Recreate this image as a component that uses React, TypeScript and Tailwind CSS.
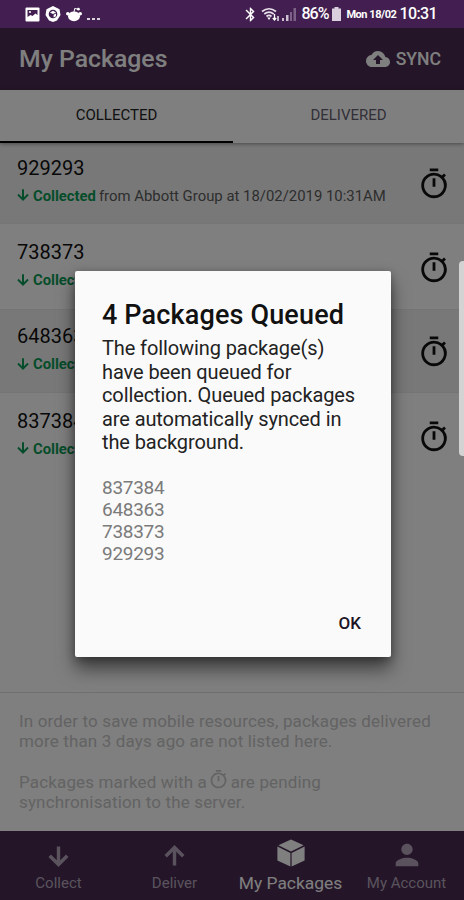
import type { ReactNode } from "react";
import { MdBluetooth, MdCloudUpload, MdOutlineTimer, MdPerson } from "react-icons/md";

const packages = [
  { id: "929293", details: "from Abbott Group at 18/02/2019 10:31AM" },
  { id: "738373", details: "" },
  { id: "648363", details: "" },
  { id: "837384", details: "" },
];

function ArrowIcon({ className }: { className: string }) {
  return (
    <svg className={className} viewBox="0 0 22 22" fill="none" stroke="currentColor" strokeWidth="3.6">
      <path d="M11 0.5V19M1.8 10.2L11 19.4L20.2 10.2" />
    </svg>
  );
}

function BoxIcon() {
  return (
    <svg className="h-7 w-7" viewBox="0 0 28 28" fill="currentColor">
      <path d="M14 0.4L26.6 6.3L14 12.6L1.4 6.3Z" />
      <path d="M0.4 7.4L13.4 13.9V27.6L0.4 21.6Z" />
      <path d="M27.6 7.4L14.6 13.9V27.6L27.6 21.6Z" />
    </svg>
  );
}

function StatusBar() {
  return (
    <div className="flex h-7 shrink-0 items-center justify-between bg-[#421f50] pr-[27px] pl-[25px] text-white">
      <div className="flex items-center gap-[5px]">
        <svg className="h-[15px] w-[15px]" viewBox="0 0 15 15">
          <rect x="0.5" y="0.5" width="14" height="14" rx="1" fill="#fff" />
          <path d="M2.5 3h10v5l-2-1.5-3 2.5-2-1-3 2z" fill="#421f50" />
          <circle cx="5" cy="5" r="1" fill="#fff" />
        </svg>
        <svg className="h-4 w-4" viewBox="0 0 16 16">
          <path d="M8 0l6.5 3.2 1 5.8L12 14.5 8 16l-4-1.5L0.5 9l1-5.8z" fill="#fff" />
          <circle cx="8" cy="8" r="4.3" fill="#421f50" />
          <path d="M5 6.4L8 4.8l3 1.6L8 8zM8.6 8.8l2.4-1.2v2.6l-2.4 1.4z" fill="#fff" />
        </svg>
        <svg className="h-[15px] w-4" viewBox="0 0 16 15" fill="#fff">
          <ellipse cx="8" cy="9.3" rx="6" ry="4.9" />
          <circle cx="1.8" cy="6.8" r="1.8" />
          <circle cx="14.2" cy="6.8" r="1.8" />
          <circle cx="12.4" cy="2.2" r="1.4" />
          <path d="M8 5l.7-3.5 3.5.7" fill="none" stroke="#fff" />
        </svg>
        <span className="flex gap-[2.5px] self-end pb-[2px]">
          <i className="size-[2.5px] bg-white/80" />
          <i className="size-[2.5px] bg-white/80" />
          <i className="size-[2.5px] bg-white/80" />
        </span>
      </div>
      <div className="flex items-center">
        <MdBluetooth className="mr-[2px] h-[17px] w-[17px]" />
        <svg className="mr-[2px] h-[15px] w-[19px]" viewBox="0 0 19 15" fill="none">
          <path d="M1 4.5Q8 -1 15 4.5M3.3 7Q8 3.2 12.7 7M5.5 9.5Q8 7.3 10.5 9.5" stroke="#e9e0ec" strokeWidth="1.7" />
          <path d="M6.3 10.5h3.4L8 13z" fill="#fff" />
          <path d="M13.5 7v6M11.8 11l1.7 2 1.7-2M17 14V9" stroke="#fff" strokeWidth="1.3" />
        </svg>
        <svg className="mr-[5px] h-[13px] w-[14px]" viewBox="0 0 14 13">
          <path d="M0 13v-3h2v3zM4 13V7h2.5v6z" fill="#cdbfd2" />
          <path d="M8 13V4h2v9zM11.5 13V0H14v13z" fill="#7b6286" />
        </svg>
        <span className="w-[31px] text-base font-medium tracking-[-0.9px]">86%</span>
        <svg className="mr-[5px] h-[14px] w-[9px]" viewBox="0 0 9 14" fill="#d9cfdd">
          <path d="M2.5 0h4v1.5H9V14H0V1.5h2.5z" />
        </svg>
        <span className="w-[53px] pt-[3px] text-[11px] font-bold tracking-[-0.45px]">Mon 18/02</span>
        <span className="text-base font-medium tracking-[-0.6px]">10:31</span>
      </div>
    </div>
  );
}

function PackageRow({ id, details, shaded }: { id: string; details: string; shaded: boolean }) {
  return (
    <div
      className={`flex h-[84.4px] items-center justify-between pr-[13px] pl-[17px] ${
        shaded ? "border-y border-[#eaeaea] bg-[#f1f1f1]" : "bg-white"
      }`}
    >
      <div className="-mt-px">
        <p className="text-[20px] leading-[24px] text-[#111]">{id}</p>
        <p className="mt-1 flex items-center leading-[24px] whitespace-nowrap text-[#5c5c5c]">
          <ArrowIcon className="mr-[4px] mb-px h-[12px] w-[12px] text-[#0b9a55]" />
          <b className="mr-[3px] text-[14.8px] font-bold text-[#0b9a55]">Collected</b>
          <span className="text-[14.9px]">{details}</span>
        </p>
      </div>
      <MdOutlineTimer className="mt-[3px] h-[34px] w-[34px] text-[#111]" />
    </div>
  );
}

function NavItem({ icon, label, active }: { icon: ReactNode; label: string; active?: boolean }) {
  return (
    <div className={`flex w-1/4 flex-col items-center pl-px ${active ? "text-white" : "text-[#b4a6bb]"}`}>
      <div className="flex h-[42px] items-center justify-center">{icon}</div>
      <span className={`leading-[18px] whitespace-nowrap ${active ? "text-[17.4px]" : "text-[15px]"}`}>{label}</span>
    </div>
  );
}

function QueuedDialog() {
  return (
    <div className="flex h-[386px] w-[316px] flex-col rounded-[2px] bg-[#fafafa] px-[27px] pt-[27px] text-black shadow-[0_12px_18px_rgba(0,0,0,0.5),0_2px_8px_rgba(0,0,0,0.3)]">
      <h2 className="text-[27px] leading-[34px] font-medium tracking-[0.15px] whitespace-nowrap text-[#111]">
        4 Packages Queued
      </h2>
      <p className="mt-[5px] text-[20px] leading-[23.5px] tracking-[-0.1px] text-[#222]">
        The following package(s)
        <br />
        have been queued for
        <br />
        collection. Queued packages
        <br />
        are automatically synced in
        <br />
        the background.
      </p>
      <div className="mt-[22.5px] text-[19px] leading-[22px] tracking-[-0.3px] text-[#7b7b7b]">
        {["837384", "648363", "738373", "929293"].map((id) => (
          <p key={id}>{id}</p>
        ))}
      </div>
      <button className="mt-auto mr-[3px] mb-[22px] self-end text-[17px] leading-6 font-medium text-[#1c1424]">
        OK
      </button>
    </div>
  );
}

export default function App() {
  return (
    <div className="relative flex h-[900px] w-[464px] flex-col overflow-hidden bg-white font-[Roboto,sans-serif]">
      <StatusBar />

      {/* Header */}
      <header className="flex h-[62px] shrink-0 items-center justify-between bg-[#482b50] pr-[23px] pl-[19px] text-white">
        <h1 className="text-[24.8px] font-medium">My Packages</h1>
        <div className="flex items-center gap-[6px]">
          <MdCloudUpload className="h-6 w-6" />
          <span className="text-[17.6px] font-medium">SYNC</span>
        </div>
      </header>

      {/* Tabs */}
      <div className="relative z-10 flex h-[53px] shrink-0 bg-white text-[15px] shadow-[0_1px_4px_rgba(0,0,0,0.4)]">
        <div className="flex w-[233px] items-center justify-center border-b-2 border-black text-[#222]">COLLECTED</div>
        <div className="flex grow items-center justify-center pb-[2px] text-[#666070]">DELIVERED</div>
      </div>

      {/* Package list */}
      <main className="-mt-[3px] grow">
        {packages.map((item, i) => (
          <PackageRow key={item.id} {...item} shaded={i % 2 === 0} />
        ))}
      </main>

      {/* Help text */}
      <section className="h-[139px] shrink-0 border-t border-[#dedede] px-[19px] pt-[18px] text-[17px] leading-[20.4px] tracking-[0.15px] whitespace-nowrap text-[#c6c6c6]">
        <p>
          In order to save mobile resources, packages delivered
          <br />
          more than 3 days ago are not listed here.
        </p>
        <p className="mt-[17px]">
          Packages marked with a <MdOutlineTimer className="-mx-[3px] inline h-[21px] w-[21px] align-[-2px]" /> are
          pending
          <br />
          synchronisation to the server.
        </p>
      </section>

      {/* Bottom nav */}
      <nav className="flex h-[69px] shrink-0 bg-[#482b50] pt-px">
        <NavItem icon={<ArrowIcon className="mt-1.5 h-[21px] w-[21px]" />} label="Collect" />
        <NavItem icon={<ArrowIcon className="mt-1 h-[21px] w-[21px] rotate-180" />} label="Deliver" />
        <NavItem icon={<BoxIcon />} label="My Packages" active />
        <NavItem icon={<MdPerson className="mt-1 h-[34px] w-[34px]" />} label="My Account" />
      </nav>

      {/* Dialog and dimmed backdrop */}
      <div className="absolute inset-x-0 top-7 bottom-0 z-20 bg-black/50 pt-[243px] pl-[75px]">
        <QueuedDialog />
      </div>

      {/* Edge panel handle */}
      <div className="absolute top-[261px] right-0 z-30 h-[195px] w-[5px] rounded-l-[4px] bg-[#d3d3d3]" />
    </div>
  );
}
